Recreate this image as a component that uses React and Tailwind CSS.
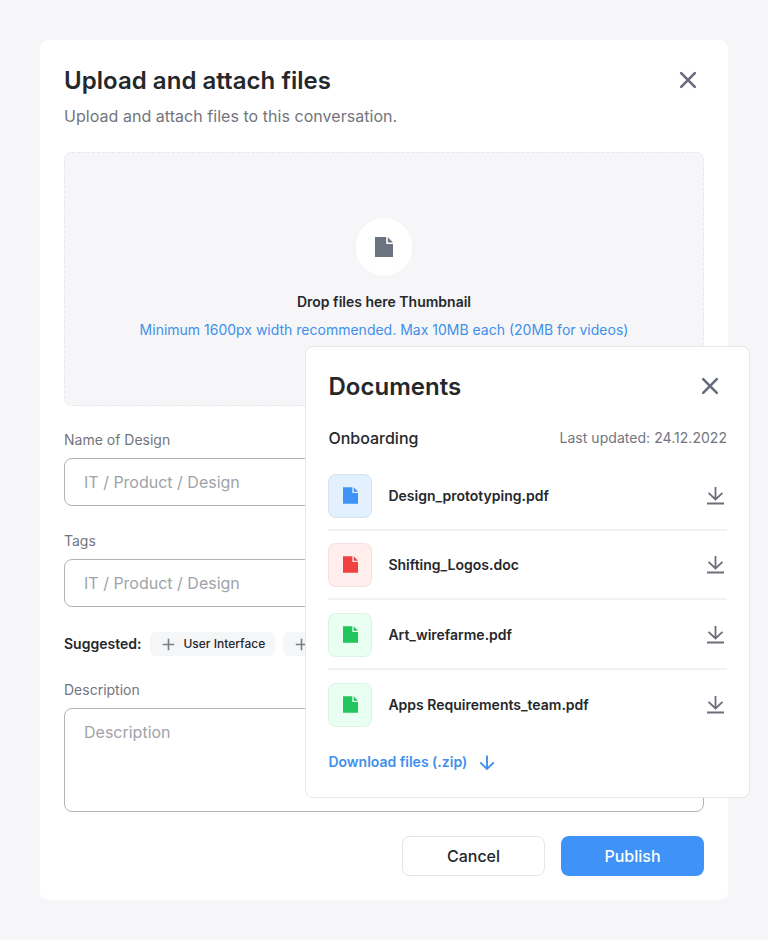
const documents = [
  { name: 'Design_prototyping.pdf', tile: 'bg-[#e3f0fe]', icon: 'text-[#3f93f7]', row: 'h-[57px]' },
  { name: 'Shifting_Logos.doc', tile: 'bg-[#ffeeeb]', icon: 'text-[#f04141]', row: 'h-[69px] pt-3' },
  { name: 'Art_wirefarme.pdf', tile: 'bg-[#e9fff2]', icon: 'text-[#22c55e]', row: 'h-[70px] pt-[13px]' },
  { name: 'Apps Requirements_team.pdf', tile: 'bg-[#e9fff2]', icon: 'text-[#22c55e]', row: 'h-[58px] pt-[13px]' },
];

function FileIcon({ className }) {
  return (
    <svg viewBox="0 0 18 20" className={className} fill="currentColor" aria-hidden="true">
      <path d="M0 0H11.2V7H18V20H0Z" />
      <path d="M12.8 .2L18 5.4H12.8Z" />
    </svg>
  );
}

function CloseIcon() {
  return (
    <svg viewBox="0 0 24 24" className="size-6" fill="none" stroke="#686b7b" strokeWidth="2.6" strokeLinecap="round" aria-hidden="true">
      <path d="M5.2 5.2L18.8 18.8M18.8 5.2L5.2 18.8" />
    </svg>
  );
}

function DownloadIcon() {
  return (
    <svg viewBox="0 0 24 24" className="size-6" fill="none" stroke="#6c6e79" strokeWidth="1.8" aria-hidden="true">
      <path d="M12.5 3V15.5M5.5 8.8L12.5 15.5L19.5 8.8M4 19.5H21" />
    </svg>
  );
}

function Chip({ children }) {
  return (
    <button className="flex h-6 items-center gap-2 whitespace-nowrap rounded-md bg-[#f5f6f8] pl-3 pr-2.5 text-xs font-medium text-[#25282b]">
      <svg viewBox="0 0 13 13" className="size-[13px]" stroke="#7b7d86" strokeWidth="1.6" aria-hidden="true">
        <path d="M6.5 .8V12.2M.8 6.5H12.2" />
      </svg>
      {children}
    </button>
  );
}

function Field({ label, children, tall }) {
  return (
    <div className="flex flex-col gap-2">
      <label className="text-sm leading-5 text-[#72757e]">{label}</label>
      <div
        className={
          tall
            ? 'h-[104px] rounded-lg border border-[#b0b3b8] px-[19px] pt-[11px] text-base leading-6 text-[#a0a3a9]'
            : 'h-12 rounded-lg border border-[#b0b3b8] px-[19px] pt-[11px] text-base leading-6 text-[#a0a3a9]'
        }
      >
        {children}
      </div>
    </div>
  );
}

function DocumentsPanel() {
  return (
    <section className="absolute left-[305px] top-[346px] h-[452px] w-[445px] rounded-lg border border-[#e8e8ea] bg-white pl-[22.4px] pr-[22px] pt-6">
      <header className="flex items-center justify-between pr-[5px]">
        <h2 className="text-2xl leading-8 font-semibold tracking-[0.04px] text-[#25282b]">Documents</h2>
        <button className="-mt-0.5" aria-label="Close documents"><CloseIcon /></button>
      </header>
      <div className="mt-[23px] flex items-center justify-between">
        <h3 className="text-base leading-6 font-medium text-[#25282b]">Onboarding</h3>
        <span className="text-sm leading-5 tracking-[0.04px] text-[#72757e]">Last updated: 24.12.2022</span>
      </div>
      <ul className="mt-6 divide-y-2 divide-[#f2f2f3]">
        {documents.map((doc) => (
          <li key={doc.name} className={doc.row}>
            <div className="flex h-11 items-center">
              <span className={`flex size-11 items-center justify-center rounded-lg border border-black/5 pb-px ${doc.tile}`}>
                <FileIcon className={`h-[17px] w-[15px] ${doc.icon}`} />
              </span>
              <span className="ml-4 text-sm leading-5 font-semibold text-[#25282b]">{doc.name}</span>
              <button className="ml-auto" aria-label="Download file"><DownloadIcon /></button>
            </div>
          </li>
        ))}
      </ul>
      <a className="mt-6 flex items-center gap-[9.5px] text-sm leading-5 font-semibold text-[#4090ec]">
        Download files (.zip)
        <svg viewBox="0 0 20 20" className="size-5" fill="none" stroke="currentColor" strokeWidth="1.9" aria-hidden="true">
          <path d="M10 3.5V17M3.2 10.4L10 17L16.8 10.4" />
        </svg>
      </a>
    </section>
  );
}

export default function App() {
  return (
    <div className="relative h-[940px] w-[768px] overflow-hidden bg-[#f6f6f8] p-10 font-['Inter',sans-serif]">
      <main className="h-[860px] rounded-lg bg-white p-6">
        <header className="flex items-center justify-between pr-1">
          <h1 className="pt-px text-2xl leading-[31px] font-semibold tracking-[0.04px] text-[#25282b]">Upload and attach files</h1>
          <button aria-label="Close"><CloseIcon /></button>
        </header>
        <p className="mt-2 text-base leading-6 tracking-[0.04px] text-[#72757e]">Upload and attach files to this conversation.</p>

        <div className="mt-6 flex h-[254px] flex-col items-center rounded-lg border border-dashed border-[#e6e7ea] bg-[#f6f6f8] pt-[65px]">
          <div className="flex h-[58px] w-14 items-center justify-center rounded-full bg-white">
            <FileIcon className="h-5 w-[18px] text-[#6b7280]" />
          </div>
          <p className="mt-4 text-sm leading-5 font-semibold text-[#25282b]">Drop files here Thumbnail</p>
          <p className="mt-2 text-sm leading-5 text-[#4090ec]">
            Minimum 1600px width recommended. Max 10MB each (20MB for videos)
          </p>
        </div>

        <div className="mt-6 flex flex-col">
          <Field label="Name of Design">IT / Product / Design</Field>
          <div className="mt-[25px]"><Field label="Tags">IT / Product / Design</Field></div>
          <div className="mt-[25px] flex items-center gap-2">
            <span className="mr-px text-sm leading-6 font-semibold text-[#25282b]">Suggested:</span>
            <Chip>User Interface</Chip>
            <Chip>UX Design</Chip>
          </div>
          <div className="mt-6"><Field label="Description" tall>Description</Field></div>
        </div>

        <footer className="mt-6 flex justify-end gap-4">
          <button className="h-10 w-[143px] rounded-lg border border-[#e6e6e9] text-base font-medium text-[#25282b]">Cancel</button>
          <button className="h-10 w-[143px] rounded-lg bg-[#3f93f8] text-base font-medium text-white">Publish</button>
        </footer>
      </main>
      <DocumentsPanel />
    </div>
  );
}
